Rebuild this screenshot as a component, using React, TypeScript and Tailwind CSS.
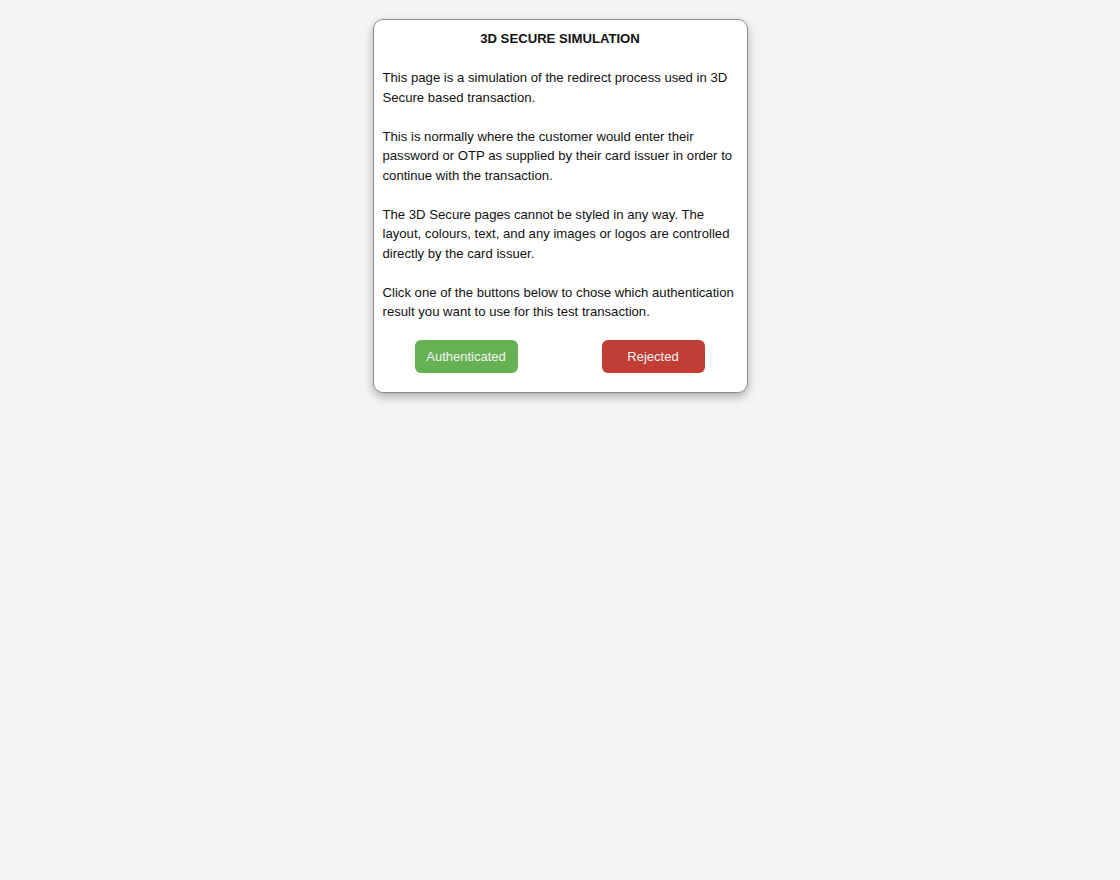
export default function App() {
  return (
    <div className="min-h-[880px] bg-[#f4f4f4] pt-[19px] text-[13.15px] leading-[19.5px] text-[#111]" style={{ fontFamily: '"Liberation Sans", Arial, sans-serif' }}>
      <div className="mx-auto w-[375px] rounded-[10px] border border-[#8c8c8c] bg-white px-[9px] pt-[9px] pb-[19px] shadow-[0_4px_10px_rgba(0,0,0,0.28)]">
        <h1 className="text-center font-bold">3D SECURE SIMULATION</h1>
        <p className="mt-[19.5px]">This page is a simulation of the redirect process used in 3D Secure based transaction.</p>
        <p className="mt-[19.5px]">
          This is normally where the customer would enter their password or OTP as supplied by their card issuer in order to continue with the transaction.
        </p>
        <p className="mt-[19.5px]">
          The 3D Secure pages cannot be styled in any way. The layout, colours, text, and any images or logos are controlled directly by the card issuer.
        </p>
        <p className="mt-[19.5px]">Click one of the buttons below to chose which authentication result you want to use for this test transaction.</p>
        <div className="mt-[18px] flex justify-between pl-[32px] pr-[33px]">
          <button className="h-[33px] w-[103px] rounded-[6px] bg-[#66b153] pt-[2px] text-[13px] text-[#f4f4f4]">Authenticated</button>
          <button className="h-[33px] w-[103px] rounded-[6px] bg-[#c03e35] pt-[2px] text-[13px] text-[#f4f4f4]">Rejected</button>
        </div>
      </div>
    </div>
  );
}
